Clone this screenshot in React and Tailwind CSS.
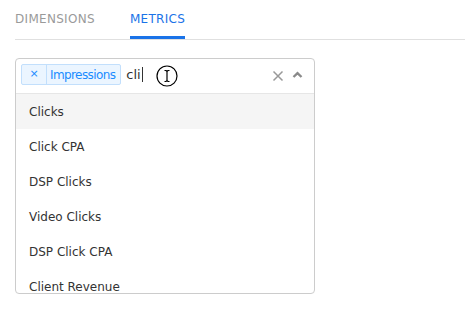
export default function App() {
  const options = ["Clicks", "Click CPA", "DSP Clicks", "Video Clicks", "DSP Click CPA", "Client Revenue"];
  return (
    <div className="w-[465px] h-[325px] bg-white overflow-hidden" style={{ fontFamily: '"DejaVu Sans", Verdana, sans-serif' }}>
      <div className="ml-[15px] flex h-[40px] border-b border-[#e0e0e0] text-[12px] tracking-[0.3px]">
        <div className="h-full flex items-start pt-[10px] text-[#9a9a9a]">DIMENSIONS</div>
        <div className="ml-[35px] h-full flex items-start pt-[10px] text-[#1a73e8] border-b-[3px] border-[#1a73e8] mb-[-1px]">METRICS</div>
      </div>
      <div className="ml-[15px] mt-[18px] w-[300px] h-[236px] border border-[#cccccc] rounded-[4px] overflow-hidden flex flex-col">
        <div className="h-[35px] shrink-0 border-b border-[#e6e6e6] flex items-start pt-[5px] pl-[5px] relative">
          <div className="h-[21px] flex items-stretch border border-[#c2dffc] bg-[#ebf5ff] rounded-[2px] text-[#1a8cff] text-[12px]">
            <div className="w-[25px] flex items-center justify-center border-r border-[#c2dffc] text-[11px]">×</div>
            <div className="pl-[3px] pr-[5px] flex items-center tracking-[-0.6px]">Impressions</div>
          </div>
          <div className="ml-[5px] h-[21px] text-[13px] text-[#333] flex items-center">cli<span className="inline-block w-px h-[15px] bg-[#333] ml-px"></span></div>
          <svg className="absolute left-[140px] top-[6px]" width="22" height="22" viewBox="0 0 22 22">
            <circle cx="11" cy="11" r="10" fill="white" stroke="black" strokeWidth="1.2" />
            <path d="M8.5 5.5h1.5l1 1 1-1h1.5M11 6.5v9M8.5 16.5h1.5l1-1 1 1h1.5" fill="none" stroke="black" strokeWidth="1.2" />
          </svg>
          <div className="absolute right-[11px] top-[11px] flex items-center gap-[8px]">
            <svg width="12" height="12" viewBox="0 0 12 12">
              <path d="M1.5 1.5L10.5 10.5M10.5 1.5L1.5 10.5" stroke="#999" strokeWidth="1.5" />
            </svg>
            <svg width="11" height="8" viewBox="0 0 11 8" className="mb-[3px]">
              <path d="M1.5 6L5.5 2.2L9.5 6" fill="none" stroke="#8a8a8a" strokeWidth="2.4" />
            </svg>
          </div>
        </div>
        <div className="flex-1 overflow-hidden">
          {options.map((o, i) => (
            <div key={o} className={`h-[35px] flex items-center pt-[1px] pl-[13px] text-[12px] text-[#333] ${i === 0 ? "bg-[#f5f5f5]" : ""}`}>{o}</div>
          ))}
        </div>
      </div>
    </div>
  );
}
